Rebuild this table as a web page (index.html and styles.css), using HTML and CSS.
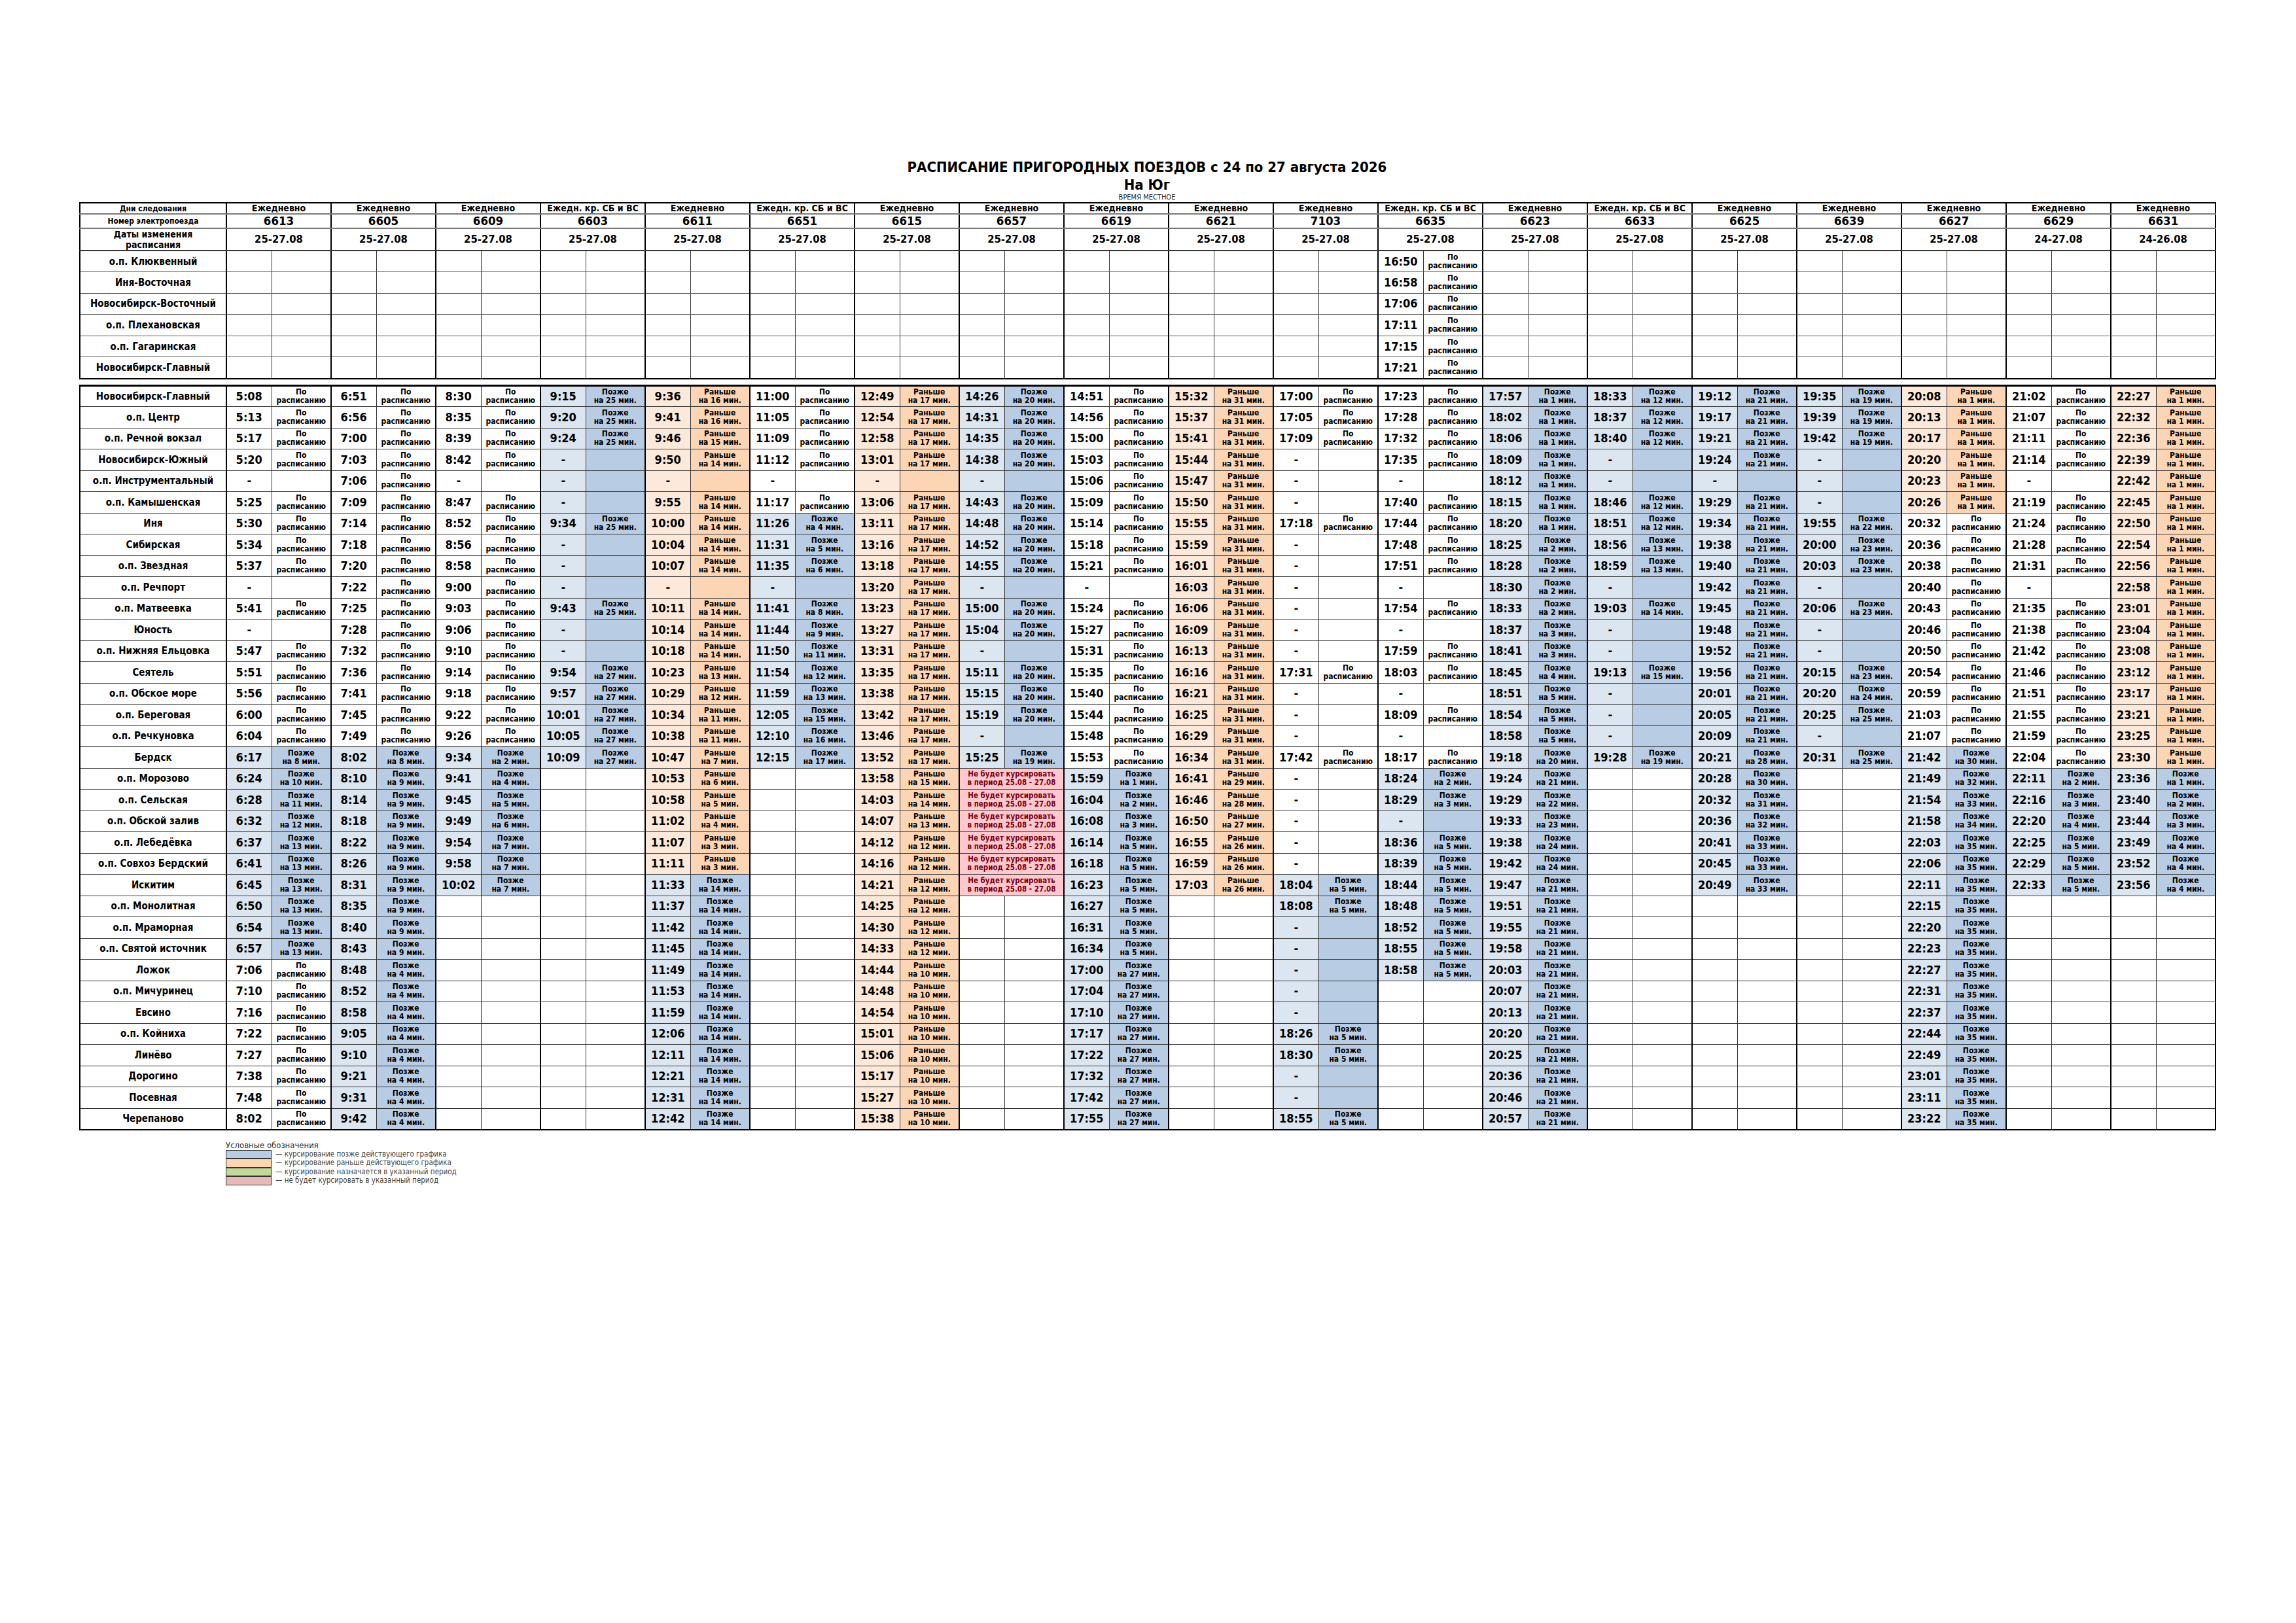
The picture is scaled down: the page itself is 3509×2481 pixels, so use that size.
FILE: index.html
```html
<!DOCTYPE html>
<html lang="ru">
<head>
<meta charset="utf-8">
<title>Расписание пригородных поездов — На Юг</title>
<link rel="stylesheet" href="styles.css">
</head>
<body>
<div class="sheet">
  <div class="title">РАСПИСАНИЕ ПРИГОРОДНЫХ ПОЕЗДОВ с 24 по 27 августа 2026</div>
  <div class="subtitle">На Юг</div>
  <div class="local">ВРЕМЯ МЕСТНОЕ</div>
  <div id="schedule"></div>
  <div class="legend">
    <div class="legend-title">Условные обозначения</div>
    <div class="legend-row"><span class="sw sw-late"></span><span class="lt">— курсирование позже действующего графика</span></div>
    <div class="legend-row"><span class="sw sw-early"></span><span class="lt">— курсирование раньше действующего графика</span></div>
    <div class="legend-row"><span class="sw sw-new"></span><span class="lt">— курсирование назначается в указанный период</span></div>
    <div class="legend-row"><span class="sw sw-cancel"></span><span class="lt">— не будет курсировать в указанный период</span></div>
  </div>
</div>
<script src="script.js"></script>
</body>
</html>
```

FILE: styles.css
```css
html, body {
  margin: 0;
  padding: 0;
  background: #fff;
}
body {
  width: 3509px;
  height: 2481px;
  overflow: hidden;
  font-family: "DejaVu Sans Condensed", "DejaVu Sans", sans-serif;
  font-stretch: condensed;
  color: #000;
}
.sheet {
  margin-left: 121px;
  width: 3264px;
  padding-top: 243px;
}
.title {
  text-align: center;
  font-weight: bold;
  font-size: 22px;
  line-height: 26px;
  height: 26px;
}
.subtitle {
  text-align: center;
  font-weight: bold;
  font-size: 22px;
  line-height: 26px;
  height: 26px;
  margin-top: 1px;
}
.local {
  text-align: center;
  font-size: 11px;
  line-height: 12px;
  height: 13px;
  color: #222;
}
.grid {
  border-collapse: collapse;
  table-layout: fixed;
  width: 3264px;
  border: 2px solid #000;
}
.grid col.cs { width: 224px; }
.grid col.ct { width: 69px; }
.grid col.cn { width: 91px; }
.grid td {
  border: 1px solid #333;
  padding: 0;
  text-align: center;
  vertical-align: middle;
  white-space: nowrap;
  overflow: hidden;
  font-weight: bold;
}
.grid td.g { border-left: 2px solid #000; }
.grid td.st {
  border-right: 2px solid #000;
  font-size: 15px;
}
.head tr.r1 { height: 17px; }
.head tr.r2 { height: 20px; }
.head tr.r3 { height: 34px; }
.head tr.r1 td, .head tr.r2 td { border-bottom: 2px solid #7a7a7a; }
.head tr.r3 td { border-bottom: 2px solid #333; }
.head tr.trow { height: 32.6px; }
.head tr.trow td { border-top-color: #555; border-bottom-color: #555; }
.head td.h1 { font-size: 12px; line-height: 14px; }
.head td.h2 { font-size: 12px; line-height: 14px; }
.head td.h3 { font-size: 14px; line-height: 16px; }
.head td.days { font-size: 14px; line-height: 15px; }
.head td.num { font-size: 18.5px; line-height: 20px; }
.head td.date { font-size: 16.5px; line-height: 20px; }
.main {
  margin-top: 8px;
  border-top: 3px solid #000;
}
.main tr { height: 32.5px; }
.grid td.t {
  font-size: 18px;
  line-height: 20px;
}
.grid td.n {
  font-size: 12px;
  line-height: 13px;
}
.grid td.x {
  font-size: 11.5px;
  line-height: 13px;
  background: #ffc7ce;
  color: #7a0010;
}
.grid td.tb { background: #dce6f1; }
.grid td.nb { background: #b8cce4; }
.grid td.to { background: #fde9d9; }
.grid td.no { background: #fcd5b4; }
.legend {
  margin-left: 224px;
  margin-top: 15px;
}
.legend-title {
  font-size: 13px;
  line-height: 15px;
  color: #333;
}
.legend-row {
  display: flex;
  align-items: center;
  height: 13.5px;
}
.sw {
  box-sizing: border-box;
  width: 70px;
  height: 13.5px;
  border: 1px solid #333;
  margin-right: 6px;
}
.sw-late { background: #b8cce4; }
.sw-early { background: #fcd5b4; }
.sw-new { background: #c4d79b; }
.sw-cancel { background: #e6b8b7; }
.lt {
  font-size: 11.5px;
  line-height: 13px;
  color: #444;
}
```

FILE: script.js
```js
(function () {
  var D = "Ежедневно", K = "Ежедн. кр. СБ и ВС";
  var trains = [
    [D, "6613", "25-27.08", "5:08P 5:13P 5:17P 5:20P - 5:25P 5:30P 5:34P 5:37P - 5:41P - 5:47P 5:51P 5:56P 6:00P 6:04P 6:17L8 6:24L10 6:28L11 6:32L12 6:37L13 6:41L13 6:45L13 6:50L13 6:54L13 6:57L13 7:06P 7:10P 7:16P 7:22P 7:27P 7:38P 7:48P 8:02P"],
    [D, "6605", "25-27.08", "6:51P 6:56P 7:00P 7:03P 7:06P 7:09P 7:14P 7:18P 7:20P 7:22P 7:25P 7:28P 7:32P 7:36P 7:41P 7:45P 7:49P 8:02L8 8:10L9 8:14L9 8:18L9 8:22L9 8:26L9 8:31L9 8:35L9 8:40L9 8:43L9 8:48L4 8:52L4 8:58L4 9:05L4 9:10L4 9:21L4 9:31L4 9:42L4"],
    [D, "6609", "25-27.08", "8:30P 8:35P 8:39P 8:42P - 8:47P 8:52P 8:56P 8:58P 9:00P 9:03P 9:06P 9:10P 9:14P 9:18P 9:22P 9:26P 9:34L2 9:41L4 9:45L5 9:49L6 9:54L7 9:58L7 10:02L7"],
    [K, "6603", "25-27.08", "9:15L25 9:20L25 9:24L25 -b -b -b 9:34L25 -b -b -b 9:43L25 -b -b 9:54L27 9:57L27 10:01L27 10:05L27 10:09L27"],
    [D, "6611", "25-27.08", "9:36E16 9:41E16 9:46E15 9:50E14 -o 9:55E14 10:00E14 10:04E14 10:07E14 -o 10:11E14 10:14E14 10:18E14 10:23E13 10:29E12 10:34E11 10:38E11 10:47E7 10:53E6 10:58E5 11:02E4 11:07E3 11:11E3 11:33L14 11:37L14 11:42L14 11:45L14 11:49L14 11:53L14 11:59L14 12:06L14 12:11L14 12:21L14 12:31L14 12:42L14"],
    [K, "6651", "25-27.08", "11:00P 11:05P 11:09P 11:12P - 11:17P 11:26L4 11:31L5 11:35L6 -b 11:41L8 11:44L9 11:50L11 11:54L12 11:59L13 12:05L15 12:10L16 12:15L17"],
    [D, "6615", "25-27.08", "12:49E17 12:54E17 12:58E17 13:01E17 -o 13:06E17 13:11E17 13:16E17 13:18E17 13:20E17 13:23E17 13:27E17 13:31E17 13:35E17 13:38E17 13:42E17 13:46E17 13:52E17 13:58E15 14:03E14 14:07E13 14:12E12 14:16E12 14:21E12 14:25E12 14:30E12 14:33E12 14:44E10 14:48E10 14:54E10 15:01E10 15:06E10 15:17E10 15:27E10 15:38E10"],
    [D, "6657", "25-27.08", "14:26L20 14:31L20 14:35L20 14:38L20 -b 14:43L20 14:48L20 14:52L20 14:55L20 -b 15:00L20 15:04L20 -b 15:11L20 15:15L20 15:19L20 -b 15:25L19 X X X X X X"],
    [D, "6619", "25-27.08", "14:51P 14:56P 15:00P 15:03P 15:06P 15:09P 15:14P 15:18P 15:21P - 15:24P 15:27P 15:31P 15:35P 15:40P 15:44P 15:48P 15:53P 15:59L1 16:04L2 16:08L3 16:14L5 16:18L5 16:23L5 16:27L5 16:31L5 16:34L5 17:00L27 17:04L27 17:10L27 17:17L27 17:22L27 17:32L27 17:42L27 17:55L27"],
    [D, "6621", "25-27.08", "15:32E31 15:37E31 15:41E31 15:44E31 15:47E31 15:50E31 15:55E31 15:59E31 16:01E31 16:03E31 16:06E31 16:09E31 16:13E31 16:16E31 16:21E31 16:25E31 16:29E31 16:34E31 16:41E29 16:46E28 16:50E27 16:55E26 16:59E26 17:03E26"],
    [D, "7103", "25-27.08", "17:00P 17:05P 17:09P - - - 17:18P - - - - - - 17:31P - - - 17:42P - - - - - 18:04L5 18:08L5 -b -b -b -b -b 18:26L5 18:30L5 -b -b 18:55L5"],
    [K, "6635", "25-27.08", "17:23P 17:28P 17:32P 17:35P - 17:40P 17:44P 17:48P 17:51P - 17:54P - 17:59P 18:03P - 18:09P - 18:17P 18:24L2 18:29L3 -b 18:36L5 18:39L5 18:44L5 18:48L5 18:52L5 18:55L5 18:58L5", "16:50P 16:58P 17:06P 17:11P 17:15P 17:21P"],
    [D, "6623", "25-27.08", "17:57L1 18:02L1 18:06L1 18:09L1 18:12L1 18:15L1 18:20L1 18:25L2 18:28L2 18:30L2 18:33L2 18:37L3 18:41L3 18:45L4 18:51L5 18:54L5 18:58L5 19:18L20 19:24L21 19:29L22 19:33L23 19:38L24 19:42L24 19:47L21 19:51L21 19:55L21 19:58L21 20:03L21 20:07L21 20:13L21 20:20L21 20:25L21 20:36L21 20:46L21 20:57L21"],
    [K, "6633", "25-27.08", "18:33L12 18:37L12 18:40L12 -b -b 18:46L12 18:51L12 18:56L13 18:59L13 -b 19:03L14 -b -b 19:13L15 -b -b -b 19:28L19"],
    [D, "6625", "25-27.08", "19:12L21 19:17L21 19:21L21 19:24L21 -b 19:29L21 19:34L21 19:38L21 19:40L21 19:42L21 19:45L21 19:48L21 19:52L21 19:56L21 20:01L21 20:05L21 20:09L21 20:21L28 20:28L30 20:32L31 20:36L32 20:41L33 20:45L33 20:49L33"],
    [D, "6639", "25-27.08", "19:35L19 19:39L19 19:42L19 -b -b -b 19:55L22 20:00L23 20:03L23 -b 20:06L23 -b -b 20:15L23 20:20L24 20:25L25 -b 20:31L25"],
    [D, "6627", "25-27.08", "20:08E1 20:13E1 20:17E1 20:20E1 20:23E1 20:26E1 20:32P 20:36P 20:38P 20:40P 20:43P 20:46P 20:50P 20:54P 20:59P 21:03P 21:07P 21:42L30 21:49L32 21:54L33 21:58L34 22:03L35 22:06L35 22:11L35 22:15L35 22:20L35 22:23L35 22:27L35 22:31L35 22:37L35 22:44L35 22:49L35 23:01L35 23:11L35 23:22L35"],
    [D, "6629", "24-27.08", "21:02P 21:07P 21:11P 21:14P - 21:19P 21:24P 21:28P 21:31P - 21:35P 21:38P 21:42P 21:46P 21:51P 21:55P 21:59P 22:04P 22:11L2 22:16L3 22:20L4 22:25L5 22:29L5 22:33L5"],
    [D, "6631", "24-26.08", "22:27E1 22:32E1 22:36E1 22:39E1 22:42E1 22:45E1 22:50E1 22:54E1 22:56E1 22:58E1 23:01E1 23:04E1 23:08E1 23:12E1 23:17E1 23:21E1 23:25E1 23:30E1 23:36L1 23:40L2 23:44L3 23:49L4 23:52L4 23:56L4"]
  ];
  var topStations = ["о.п. Клюквенный", "Иня-Восточная", "Новосибирск-Восточный", "о.п. Плехановская", "о.п. Гагаринская", "Новосибирск-Главный"];
  var stations = ["Новосибирск-Главный", "о.п. Центр", "о.п. Речной вокзал", "Новосибирск-Южный", "о.п. Инструментальный", "о.п. Камышенская", "Иня", "Сибирская", "о.п. Звездная", "о.п. Речпорт", "о.п. Матвеевка", "Юность", "о.п. Нижняя Ельцовка", "Сеятель", "о.п. Обское море", "о.п. Береговая", "о.п. Речкуновка", "Бердск", "о.п. Морозово", "о.п. Сельская", "о.п. Обской залив", "о.п. Лебедёвка", "о.п. Совхоз Бердский", "Искитим", "о.п. Монолитная", "о.п. Мраморная", "о.п. Святой источник", "Ложок", "о.п. Мичуринец", "Евсино", "о.п. Койниха", "Линёво", "Дорогино", "Посевная", "Черепаново"];

  function cell(tok) {
    if (!tok || tok === "_") return '<td class="t g"></td><td class="n"></td>';
    if (tok === "X") return '<td class="g x" colspan="2">Не будет курсировать<br>в период 25.08 - 27.08</td>';
    if (tok.charAt(0) === "-") {
      var a = tok === "-b" ? " tb" : tok === "-o" ? " to" : "";
      var b = tok === "-b" ? " nb" : tok === "-o" ? " no" : "";
      return '<td class="t g' + a + '">-</td><td class="n' + b + '"></td>';
    }
    var m = tok.match(/^(\d+:\d+)([PLE])(\d*)$/);
    if (m[2] === "P") return '<td class="t g">' + m[1] + '</td><td class="n">По<br>расписанию</td>';
    if (m[2] === "L") return '<td class="t g tb">' + m[1] + '</td><td class="n nb">Позже<br>на ' + m[3] + ' мин.</td>';
    return '<td class="t g to">' + m[1] + '</td><td class="n no">Раньше<br>на ' + m[3] + ' мин.</td>';
  }

  var cols = '<colgroup><col class="cs">';
  for (var i = 0; i < trains.length; i++) cols += '<col class="ct"><col class="cn">';
  cols += '</colgroup>';

  var parsed = trains.map(function (t) { return t[3].split(" "); });
  var parsedTop = trains.map(function (t) { return t[4] ? t[4].split(" ") : []; });

  var h = '<table class="grid head">' + cols;
  h += '<tr class="r1"><td class="st h1">Дни следования</td>';
  trains.forEach(function (t) { h += '<td class="g days" colspan="2">' + t[0] + '</td>'; });
  h += '</tr><tr class="r2"><td class="st h2">Номер электропоезда</td>';
  trains.forEach(function (t) { h += '<td class="g num" colspan="2">' + t[1] + '</td>'; });
  h += '</tr><tr class="r3"><td class="st h3">Даты изменения<br>расписания</td>';
  trains.forEach(function (t) { h += '<td class="g date" colspan="2">' + t[2] + '</td>'; });
  h += '</tr>';
  topStations.forEach(function (s, r) {
    h += '<tr class="trow"><td class="st">' + s + '</td>';
    parsedTop.forEach(function (p) { h += cell(p[r]); });
    h += '</tr>';
  });
  h += '</table>';

  h += '<table class="grid main">' + cols;
  stations.forEach(function (s, r) {
    h += '<tr><td class="st">' + s + '</td>';
    parsed.forEach(function (p) { h += cell(p[r]); });
    h += '</tr>';
  });
  h += '</table>';

  document.getElementById("schedule").innerHTML = h;
})();
```
